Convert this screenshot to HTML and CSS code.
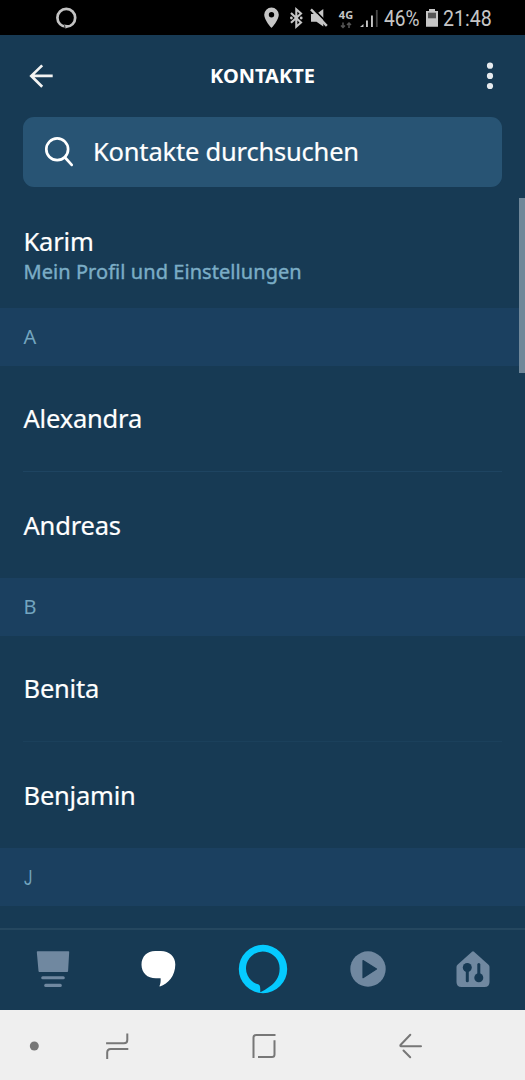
FILE: index.html
```html
<!DOCTYPE html>
<html lang="de">
<head>
<meta charset="utf-8">
<title>Kontakte</title>
<link rel="stylesheet" href="styles.css">
</head>
<body>
<div class="phone">
  <div class="status">
    <svg class="status-ring" width="22" height="22" viewBox="55 7 22 22"><circle cx="66.300" cy="17.800" r="8.900" fill="none" stroke="#c3c3c3" stroke-width="2.700"/><path d="M63.500 24.500l1.500 3.900 1.300-.2 3-3z" fill="#c3c3c3"/><path d="M64.600 25.200l.5 3.500" stroke="#000" stroke-width=".8"/></svg>
    <div class="status-icons">
      <svg width="78" height="35" viewBox="260 0 78 35" fill="#c6c6c6">
        <path fill-rule="evenodd" d="M271.500 7.500a7.300 7.300 0 0 0-7.300 7.300c0 5.400 7.300 13.200 7.300 13.200s7.300-7.800 7.300-13.200a7.300 7.300 0 0 0-7.300-7.300zm0 4.500a2.700 2.700 0 1 1 0 5.400a2.700 2.700 0 0 1 0-5.400z"/>
        <path d="M291 13l10 9.400-4.700 4.300V9.300l4.700 4.300L291 22.800" fill="none" stroke="#c6c6c6" stroke-width="2.100"/><circle cx="291.400" cy="18" r="1.400"/><circle cx="301.200" cy="18" r="1.400"/>
        <path d="M311 14h5.500l6.800-5v17.500l-6.800-4.800H311z"/>
        <path d="M312.500 8.200L329.500 25.200" stroke="#000" stroke-width="1.800"/><path d="M311 9.300L326.800 25.800" stroke="#c6c6c6" stroke-width="2.400"/>
      </svg>
      <div class="network"><span class="network-type">4G</span>
        <svg width="12" height="7" viewBox="0 0 12 7" fill="none" stroke="#555" stroke-width="1.500"><path d="M3 .5v5M1 3.500l2 2 2-2M9 6V1M7 3l2-2 2 2"/></svg>
      </div>
      <svg class="signal" width="20" height="20" viewBox="359 8 20 20" fill="#c6c6c6"><path d="M360 27l3.500-3v3zM366 20.500h1.900V27H366zM371 15.500h1.900V27H371z"/><path d="M375.900 10h1.800v17h-1.800z" fill="#474747"/></svg>
      <span class="percent">46%</span>
      <svg class="battery" width="14" height="20" viewBox="425 8 14 20"><path d="M429 9h6v2h3v15.700h-12V11h3z" fill="#c6c6c6"/><path d="M428 12.700h8v5.600h-8z" fill="#555"/></svg>
      <span class="clock">21:48</span>
    </div>
  </div>
  <header class="topbar">
    <svg width="26" height="26" viewBox="27 63 26 26" fill="none" stroke="#f3f3f2" stroke-width="2.700"><path d="M52.700 75.900H31.500M42.200 65.400L31.300 75.900l10.900 10.800"/></svg>
    <h1 class="title">KONTAKTE</h1>
    <svg width="26" height="30" viewBox="477 61 26 30" fill="#e7ebef"><circle cx="490" cy="65.700" r="3.100"/><circle cx="490" cy="75.900" r="3.100"/><circle cx="490" cy="86" r="3.100"/></svg>
  </header>
  <div class="search">
    <svg width="32" height="32" viewBox="43 136 32 32" fill="none" stroke="#fff" stroke-width="2.700" stroke-linecap="round"><circle cx="57.200" cy="149.300" r="10.900"/><path d="M65 157.500l6.700 7.400"/></svg>
    <span class="search-text">Kontakte durchsuchen</span>
  </div>
  <main class="list">
    <section class="profile">
      <div class="name">Karim</div>
      <div class="subtitle">Mein Profil und Einstellungen</div>
    </section>
    <div class="letter">A</div>
    <div class="contact divided"><span class="name">Alexandra</span></div>
    <div class="contact"><span class="name">Andreas</span></div>
    <div class="letter">B</div>
    <div class="contact divided faint"><span class="name">Benita</span></div>
    <div class="contact"><span class="name">Benjamin</span></div>
    <div class="letter short-descender"><span>J</span></div>
    <div class="scrollbar"></div>
  </main>
  <nav class="tabs">
    <svg width="50" height="50" viewBox="27.500 944 50 50" fill="#7088a0"><path d="M37 951.200h31q.8 0 .7.800l-1.100 19q0 1-1 1H39q-1 0-1-1l-1.700-19q0-.8.700-.8z"/><rect x="40.700" y="976.200" width="23.600" height="3" rx="1.500"/><rect x="43.700" y="983.700" width="17.600" height="3.200" rx="1.500"/></svg>
    <svg width="50" height="50" viewBox="132.500 944 50 50"><path fill="#fff" d="M154.700 951h5.600c8.500 0 14.500 5.500 14.500 13.500 0 11-7 19.500-15.400 21.900q-.7 0-.3-.7c1-2 1.200-4.500 1-7.400h-4.800c-8.500 0-14.300-5.700-14.300-13.600 0-8 5.500-13.700 13.700-13.700z"/></svg>
    <svg width="50" height="50" viewBox="237.500 944 50 50"><path fill="#05caff" fill-rule="evenodd" d="M262.500 944.800a24.200 24.200 0 1 1 0 48.400a24.200 24.200 0 0 1 0-48.400zM259.800 992.300c0-3.300 0-5.400-.8-7-.6-1-2-1.100-3.200-1.500a16.800 16.800 0 1 1 23.300-14.900c0 8-4.500 14-10.600 18-3 2-5.700 3.900-8.700 5.400z"/></svg>
    <svg width="50" height="50" viewBox="342.500 944 50 50"><circle cx="367.500" cy="969" r="17.700" fill="#7088a0"/><path d="M362.500 960.500l13.500 8.500-13.500 8.700z" fill="#173a54" stroke="#173a54" stroke-width="1.200" stroke-linejoin="round"/></svg>
    <svg width="50" height="50" viewBox="447.500 944 50 50"><path fill="#7088a0" d="M471.500 951.700q1-.8 2 0l14.500 13q1 1 1 2.200V982q0 5-5 5h-23q-5 0-5-5v-15.100q0-1.200 1-2.200z"/><g fill="#173a54"><circle cx="466.800" cy="967.500" r="4.500"/><rect x="465.300" y="967" width="3" height="15.300" rx="1.500"/><circle cx="478.300" cy="977.700" r="4.500"/><rect x="476.800" y="963" width="3" height="15" rx="1.500"/></g></svg>
  </nav>
  <div class="system">
    <svg width="30" height="30" viewBox="19 1031 30 30"><circle cx="34.300" cy="1046" r="4.500" fill="#777"/></svg>
    <svg width="30" height="30" viewBox="102 1031 30 30" fill="none" stroke="#777" stroke-width="2"><path d="M106.100 1043.200h17.900q3.300 0 3.300-3.300v-6.500M128.300 1048.900h-17.600q-3.500 0-3.500 3.500v6.500"/></svg>
    <svg width="30" height="30" viewBox="248.500 1031 30 30" fill="none" stroke="#777" stroke-width="2"><path d="M275 1035h-19.500q-2.500 0-2.500 2.500v20.500M274 1040.300v14.200q0 2.500-2.500 2.500h-14"/></svg>
    <svg width="30" height="30" viewBox="395 1031 30 30" fill="none" stroke="#777" stroke-width="2" stroke-linecap="round" stroke-linejoin="round"><path d="M421 1046.200h-20q-1 0-.5-1.200l9.800-10.200M403.500 1050.500l6.700 6.800"/></svg>
  </div>
</div>
</body>
</html>
```
FILE: styles.css
```css
* { box-sizing: border-box; }
body { margin: 0; background: #173a54; font-family: "Noto Sans", sans-serif; color: #fff; }
svg { display: block; flex: none; }
.phone { width: 525px; height: 1080px; display: flex; flex-direction: column; overflow: hidden; background: #173a54; }
.status { height: 35px; flex: none; background: #000; display: flex; justify-content: space-between; align-items: center; padding-left: 55px; font-family: Roboto, sans-serif; color: #c6c6c6; }
.status-icons { width: 265px; height: 35px; display: flex; align-items: center; }
.network { width: 16px; display: flex; flex-direction: column; align-items: center; gap: 2px; padding-top: 2px; }
.network-type { font: 700 11px/11px "Noto Sans", sans-serif; }
.signal { margin-left: 5px; }
.percent, .clock { font-size: 22.500px; line-height: 35px; transform-origin: left center; white-space: nowrap; padding-top: 1px; }
.percent { width: 41px; margin-left: 5px; transform: scaleX(.85); }
.clock { width: 60px; margin-left: 4px; transform: scaleX(.87); }
.topbar { height: 82px; flex: none; padding: 0 22px 0 27px; display: grid; grid-template-columns: 26px 1fr 26px; align-items: center; }
.title { margin: 0 0 0 -5px; font-size: 20px; line-height: 28px; font-weight: 700; text-align: center; }
.search { height: 70px; flex: none; margin: 0 23px; padding-left: 20px; border-radius: 11px; background: #285474; display: flex; align-items: center; gap: 18px; }
.search-text, .name { font-size: 25.500px; line-height: 36px; letter-spacing: -.2px; white-space: nowrap; -webkit-text-stroke: .2px currentColor; }
.search-text { padding-bottom: 2px; }
.list { position: relative; height: 741px; flex: none; overflow: hidden; }
.profile { height: 121px; padding: 36px 23.500px 0; }
.subtitle { color: #7badc6; font-size: 20px; line-height: 26px; letter-spacing: .06px; white-space: nowrap; -webkit-text-stroke: .4px currentColor; }
.letter { height: 58px; padding-left: 23.500px; background: #1b4060; color: #73a5bf; font-size: 20px; line-height: 57px; }
.short-descender { font-family: Roboto, sans-serif; line-height: 60px; }
.short-descender span { display: inline-block; transform: scaleX(.75); transform-origin: left; }
.contact { height: 106px; margin: 0 23px; padding-left: .5px; display: flex; align-items: center; }
.divided { padding-bottom: 2px; border-bottom: 1px solid #1e4461; }
.faint { border-color: #1b405b; }
.scrollbar { position: absolute; right: 0; top: 11px; width: 6px; height: 175px; background: #708799; }
.tabs { height: 82px; flex: none; padding-bottom: 2px; border-top: 2px solid #25475f; display: grid; grid-template-columns: repeat(5, 1fr); align-items: center; justify-items: center; }
.system { height: 70px; flex: none; padding-top: 2px; background: #efefef; display: grid; grid-template-columns: 68px 98px 195px 98px; align-items: center; justify-items: center; }
```
